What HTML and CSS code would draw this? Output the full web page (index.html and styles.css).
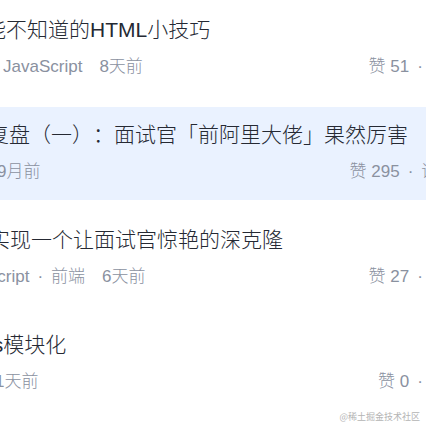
FILE: index.html
```html
<!DOCTYPE html>
<html lang="zh-CN">
<head>
<meta charset="utf-8">
<link rel="stylesheet" href="styles.css">
</head>
<body>
<ul class="list">
  <li class="item">
    <div class="title shift-t1">能不知道的HTML小技巧</div>
    <div class="meta">
      <div class="left shift-m1"><span class="tags">JavaScript</span><span class="time">8天前</span></div>
      <div class="right"><span>赞 51</span><span class="dot">·</span><span>评论 6</span></div>
    </div>
  </li>
  <li class="item active">
    <div class="title shift-t2">复盘（一）：面试官「前阿里大佬」果然厉害</div>
    <div class="meta">
      <div class="left shift-m2"><span class="time">9月前</span></div>
      <div class="right"><span>赞 295</span><span class="dot">·</span><span>评论 58</span></div>
    </div>
  </li>
  <li class="item">
    <div class="title shift-t3">实现一个让面试官惊艳的深克隆</div>
    <div class="meta">
      <div class="left shift-m3"><span class="tags">JavaScript<span class="sep">·</span>前端</span><span class="time">6天前</span></div>
      <div class="right"><span>赞 27</span><span class="dot">·</span><span>评论 4</span></div>
    </div>
  </li>
  <li class="item">
    <div class="title shift-t4">js模块化</div>
    <div class="meta">
      <div class="left shift-m4"><span class="time">1天前</span></div>
      <div class="right"><span>赞 0</span><span class="dot">·</span><span>评论 0</span></div>
    </div>
  </li>
</ul>
<div class="watermark">@稀土掘金技术社区</div>
</body>
</html>
```
FILE: styles.css
```css
html, body {
  margin: 0;
  padding: 0;
  width: 426px;
  height: 426px;
  overflow: hidden;
  background: #ffffff;
  font-family: "Liberation Sans", "Noto Sans CJK SC", sans-serif;
  text-spacing-trim: space-all;
}

.list {
  list-style: none;
  margin: 0;
  padding: 2px 0 0 0;
  display: flex;
  flex-direction: column;
  gap: 12px;
  width: 479px;
}

.item {
  height: 93px;
  box-sizing: border-box;
  padding: 16px 0 0 0;
}

.item.active {
  background: #eaf2ff;
}

.title {
  font-size: 21px;
  line-height: 24px;
  font-weight: 300;
  color: #252933;
  white-space: nowrap;
}

.meta {
  margin-top: 14px;
  display: flex;
  justify-content: space-between;
  align-items: center;
  font-size: 17px;
  line-height: 22px;
  font-weight: 300;
  color: #8a919f;
  white-space: nowrap;
}

.left {
  display: flex;
  gap: 17px;
}

.right {
  display: flex;
  gap: 8px;
}

.sep {
  margin: 0 8px;
}

.shift-t1 { margin-left: -15px; }
.shift-t2 { margin-left: -12px; }
.shift-t3 { margin-left: -11px; }
.shift-t4 { margin-left: -12px; }
.shift-m1 { margin-left: 3px; }
.shift-m2 { margin-left: -3px; }
.shift-m3 { margin-left: -50px; }
.shift-m4 { margin-left: -5px; }

.watermark {
  position: absolute;
  right: 6px;
  bottom: 3px;
  font-family: "Noto Sans CJK SC", sans-serif;
  font-size: 9px;
  line-height: 12px;
  color: #b4b4b4;
}
```
